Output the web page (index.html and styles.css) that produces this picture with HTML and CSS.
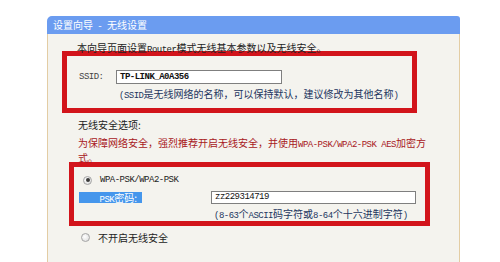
FILE: index.html
```html
<!DOCTYPE html>
<html lang="zh-CN">
<head>
<meta charset="utf-8">
<title>设置向导 - 无线设置</title>
<link rel="stylesheet" href="styles.css">
</head>
<body>
<div class="page">
  <div class="panel">
    <div class="titlebar">设置向导 - 无线设置</div>
    <div class="panel-body">
      <p class="intro">本向导页面设置<span class="en">Router</span>模式无线基本参数以及无线安全。</p>
      <div class="mark mark-ssid">
        <div class="row ssid-row">
          <span class="en label">SSID:</span>
          <div class="input input-ssid en">TP-LINK_A0A356</div>
        </div>
        <p class="hint hint-ssid"><span class="en">(SSID</span>是无线网络的名称，可以保持默认，建议修改为其他名称<span class="en">)</span></p>
      </div>
      <p class="section">无线安全选项:</p>
      <p class="warn">为保障网络安全，强烈推荐开启无线安全，并使用<span class="en">WPA-PSK/WPA2-PSK AES</span>加密方<br>式。</p>
      <div class="mark mark-psk">
        <div class="row radio-row">
          <span class="radio checked"></span><span class="en opt">WPA-PSK/WPA2-PSK</span>
        </div>
        <div class="row psk-row">
          <span class="psk-label"><span class="en">PSK</span>密码:</span>
          <div class="input input-psk en">zz229314719</div>
        </div>
        <p class="hint hint-psk"><span class="en">(8-63</span>个<span class="en">ASCII</span>码字符或<span class="en">8-64</span>个十六进制字符<span class="en">)</span></p>
      </div>
      <div class="row radio-row off">
        <span class="radio"></span><span class="opt">不开启无线安全</span>
      </div>
    </div>
  </div>
</div>
</body>
</html>
```

FILE: styles.css
```css
* { box-sizing: border-box; margin: 0; padding: 0; }
html, body { height: 262px; overflow: hidden; background: #fff; }
body {
  font-family: "Noto Sans CJK SC", "Noto Sans", sans-serif;
  font-size: 10px;
  color: #222;
}
.en {
  font-family: "Liberation Mono", "Noto Sans CJK SC", monospace;
  font-size: 9px;
  letter-spacing: -0.5px;
  line-height: 1;
}

.page { padding: 16px 0 0 47px; }
.panel { width: 413px; }
.titlebar {
  height: 18px;
  background: #6b9cf0;
  border-radius: 5px 3px 0 0;
  color: #fff;
  font-size: 10px;
  line-height: 18px;
  padding-left: 6px;
  word-spacing: 3px;
}
.panel-body {
  height: 240px;
  background: #f4f3ee;
  border-left: 1px solid #e3cda4;
  border-right: 1px solid #e3cda4;
  padding-top: 7px;
}
.intro { margin-left: 29px; line-height: 13px; height: 13px; color: #222; }

.mark { border: 5px solid #d2141b; }
.mark-ssid { margin: -3px 0 0 14px; width: 355px; height: 62px; padding: 14px 0 0 12px; }
.row { display: flex; align-items: center; }
.ssid-row { height: 14px; }
.label { width: 37px; color: #444; }
.input {
  background: #fff;
  border: 1px solid #7f7f7f;
  line-height: 12px;
  padding-left: 3px;
  color: #111;
}
.input-ssid { width: 166px; height: 14px; font-weight: bold; }
.hint { line-height: 13px; height: 13px; color: #23365e; }
.hint-ssid { margin: 3px 0 0 40px; }

.section { margin: 4px 0 0 30px; line-height: 15px; height: 15px; }
.warn { margin: 3px 0 0 30px; line-height: 15px; height: 30px; color: #a8181c; white-space: nowrap; }

.mark-psk { margin: -3px 0 0 21px; width: 361px; height: 64px; padding: 7px 0 0 5px; }
.radio-row { height: 12px; }
.radio {
  width: 9px;
  height: 9px;
  border-radius: 50%;
  border: 1px solid #a5a5a5;
  background: radial-gradient(circle at 40% 40%, #fff 0%, #e4e4e4 70%, #cfcfcf 100%);
  margin-left: 4px;
  margin-right: 8px;
  flex: none;
  position: relative;
}
.radio.checked::after {
  content: "";
  position: absolute;
  left: 1.5px;
  top: 1.5px;
  width: 4px;
  height: 4px;
  border-radius: 50%;
  background: #3a3a3a;
}
.opt { color: #222; }
.psk-row { margin-top: 5px; height: 13px; }
.psk-label {
  width: 63px;
  height: 11px;
  background: #4596ec;
  color: #fff;
  padding-right: 5px;
  text-align: right;
  line-height: 11px;
}
.input-psk { width: 205px; height: 13px; margin-left: 69px; line-height: 11px; }
.hint-psk { margin: 3px 0 0 135px; }

.off { margin: 5px 0 0 29px; height: 13px; }
```
